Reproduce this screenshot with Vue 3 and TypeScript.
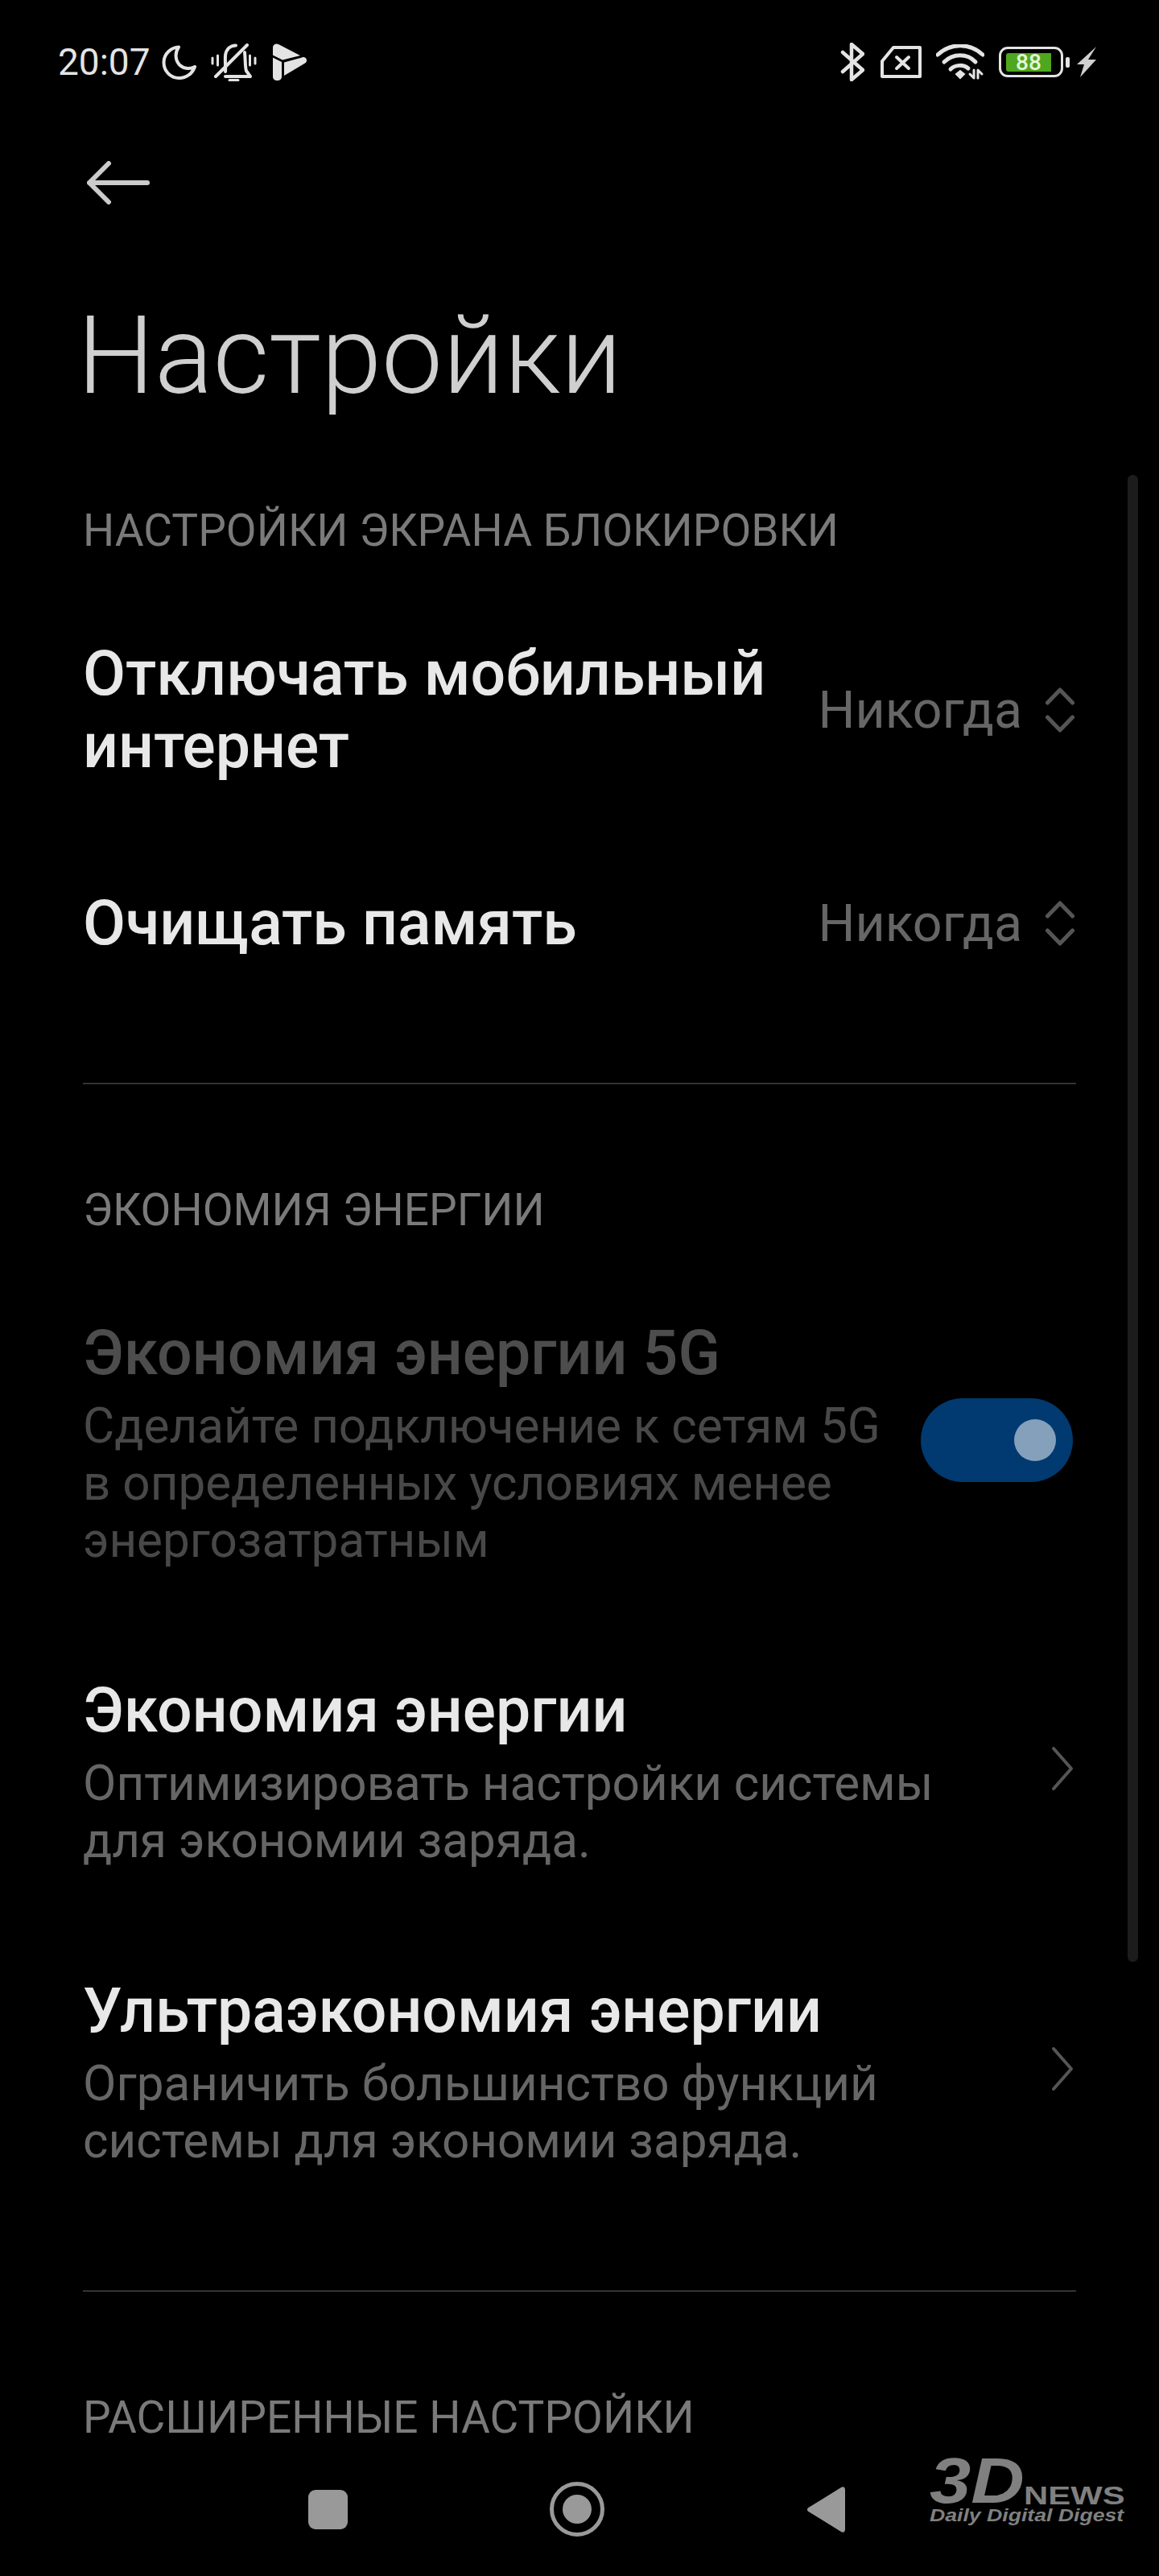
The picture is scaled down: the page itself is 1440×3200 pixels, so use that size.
<template>
  <div class="screen">
    <div class="statusbar">
      <div class="status-left">
        <span class="time">20:07</span>
        <svg class="ic-moon" viewBox="0 0 43 43" fill="none" stroke="#e4e4e4" stroke-width="4" stroke-linejoin="round">
          <path d="M21 2.500C12 2.800 2.500 10.500 2.500 21.500C2.500 32.500 11 41 21.500 41C30.500 41 38 35.500 41 27C36 30 28 30 22.500 25C16.500 19 16 9.500 21 2.500Z" />
        </svg>
        <svg class="ic-bell" viewBox="0 0 57 47" fill="none" stroke="#e4e4e4" stroke-width="4" stroke-linecap="round" stroke-linejoin="round">
          <path d="M18 35C18.500 30 17.500 22 18 15C19 7 24 2.500 31 2.500" />
          <path d="M42 11C43 20 42.500 30 44 34L49 41H18" />
          <path d="M6 41L45 2" />
          <path d="M2 18V25M8.500 15V27M48.500 15V27M55 18V25" stroke-width="3" />
          <path d="M23 45.500H34" stroke-width="3" />
        </svg>
        <svg class="ic-play" viewBox="0 0 43 46" fill="#e4e4e4">
          <path d="M0 5C0 1 4 -0.500 7 1L34 15L12 20.500L0 14.500Z" />
          <path d="M14 23.500L36 17.500C38 16.500 40 17 41.500 19C42.500 21 42 23.500 40 24.500L14 40Z" />
          <path d="M0 17.500L11 23V41C11 44 9 46 5.500 46C2 46 0 44 0 41Z" />
        </svg>
      </div>
      <div class="status-right">
        <svg class="ic-bt" viewBox="0 0 30 48" fill="none" stroke="#e4e4e4" stroke-width="4.500" stroke-linecap="round" stroke-linejoin="round">
          <path d="M3 12L28 34L14 46V2L28 14L3 36" />
        </svg>
        <svg class="ic-sim" viewBox="0 0 51 40" fill="none" stroke="#e4e4e4" stroke-width="4" stroke-linecap="round" stroke-linejoin="round">
          <path d="M2 38V19L16 2H49V38Z" />
          <path d="M20 14L35 28M35 14L20 28" />
        </svg>
        <svg class="ic-wifi" viewBox="0 0 60 44" fill="none" stroke="#e4e4e4" stroke-linecap="round">
          <path d="M2 13C18 -2 42 -2 58 13" stroke-width="5" />
          <path d="M10 22C21 11 39 11 49 22" stroke-width="5" />
          <path d="M18 31C24 25 34 25 40 30" stroke-width="5" />
          <path d="M25 37L30 33L35 37L30 42Z" fill="#e4e4e4" stroke-width="2" />
          <path d="M47 32V42L42 37M52 42V32L57 37" stroke-width="3" stroke-linejoin="round" />
        </svg>
        <div class="battery">
          <div class="battery-body"><span class="battery-fill">88</span></div>
          <span class="battery-nub"></span>
        </div>
        <svg class="ic-bolt" viewBox="0 0 24 38" fill="#cfcfcf">
          <path d="M24 0L14 16L24 16L4 38L9 22L0 22Z" />
        </svg>
      </div>
    </div>

    <div class="back">
      <svg viewBox="0 0 78 54" fill="none" stroke="#cccccc" stroke-width="6" stroke-linecap="round" stroke-linejoin="round">
        <path d="M27 3L3 27L27 51M3 27H75" />
      </svg>
    </div>
    <h1 class="title">Настройки</h1>

    <div class="content">
      <section v-for="s in sections" :key="s.heading" class="section">
        <h2 class="heading">{{ s.heading }}</h2>
        <div v-for="r in s.rows" :key="r.title" class="row" :class="r.kind">
          <div class="row-text">
            <div class="row-title">{{ r.title }}</div>
            <div v-if="r.sub" class="row-sub">{{ r.sub }}</div>
          </div>
          <div v-if="r.value" class="row-value">
            <span>{{ r.value }}</span>
            <svg class="updown" viewBox="0 0 36 56" fill="none" stroke="#555" stroke-width="5" stroke-linecap="round" stroke-linejoin="round">
              <path d="M2.500 19L18 3L33.500 19M2.500 37L18 53L33.500 37" />
            </svg>
          </div>
          <div v-else-if="r.toggle" class="toggle"><span class="knob"></span></div>
          <svg v-else class="chevron" viewBox="0 0 28 56" fill="none" stroke="#555" stroke-width="4" stroke-linecap="round" stroke-linejoin="round">
            <path d="M3 3L25 28L3 53" />
          </svg>
        </div>
      </section>
    </div>

    <nav class="navbar">
      <span class="nav-square"></span>
      <span class="nav-home"><span class="nav-dot"></span></span>
      <svg class="nav-back" viewBox="0 0 47 57" fill="#999">
        <path d="M1.500 26L42 1C45 -1 47 1 47 4V53C47 56 45 58 42 56L1.500 31C-0.500 30 -0.500 27 1.500 26Z" />
      </svg>
    </nav>

    <div class="scrollbar"></div>
    <div class="logo">
      <div class="logo-top"><span class="logo-3d">3D</span><span class="logo-news">NEWS</span></div>
      <div class="logo-sub">Daily Digital Digest</div>
    </div>
  </div>
</template>

<script setup lang="ts">
interface Row {
  title: string
  sub?: string
  value?: string
  toggle?: boolean
  kind?: string
}

const sections: { heading: string; rows: Row[] }[] = [
  {
    heading: 'НАСТРОЙКИ ЭКРАНА БЛОКИРОВКИ',
    rows: [
      { title: 'Отключать мобильный интернет', value: 'Никогда', kind: 'row-select' },
      { title: 'Очищать память', value: 'Никогда', kind: 'row-select' }
    ]
  },
  {
    heading: 'ЭКОНОМИЯ ЭНЕРГИИ',
    rows: [
      {
        title: 'Экономия энергии 5G',
        sub: 'Сделайте подключение к сетям 5G в определенных условиях менее энергозатратным',
        toggle: true,
        kind: 'disabled'
      },
      { title: 'Экономия энергии', sub: 'Оптимизировать настройки системы для экономии заряда.' },
      { title: 'Ультраэкономия энергии', sub: 'Ограничить большинство функций системы для экономии заряда.' }
    ]
  },
  { heading: 'РАСШИРЕННЫЕ НАСТРОЙКИ', rows: [] }
]
</script>

<style>
html,
body {
  margin: 0;
  background: #000;
}
</style>

<style scoped>
.screen {
  position: relative;
  display: flex;
  flex-direction: column;
  width: 1440px;
  height: 3200px;
  overflow: hidden;
  background: #000;
  color: #eee;
  font-family: Roboto, "Noto Sans", sans-serif;
}
.statusbar {
  display: flex;
  flex: none;
  align-items: center;
  justify-content: space-between;
  height: 48px;
  margin-top: 53px;
  padding: 0 78px 0 72px;
}
.status-left,
.status-right {
  display: flex;
  align-items: center;
}
.time {
  font-size: 46px;
  line-height: 48px;
  color: #e4e4e4;
}
.ic-moon {
  width: 43px;
  height: 43px;
  margin-left: 14px;
}
.ic-bell {
  width: 57px;
  height: 47px;
  margin-left: 18px;
}
.ic-play {
  width: 43px;
  height: 46px;
  margin-left: 20px;
}
.ic-bt {
  width: 30px;
  height: 48px;
}
.ic-sim {
  width: 51px;
  height: 40px;
  margin-left: 20px;
}
.ic-wifi {
  width: 60px;
  height: 44px;
  margin-left: 18px;
}
.battery {
  display: flex;
  align-items: center;
  margin-left: 18px;
}
.battery-body {
  display: flex;
  width: 80px;
  height: 38px;
  padding: 5px 12px 4px 6px;
  border: 3px solid #e4e4e4;
  border-radius: 11px;
  box-sizing: border-box;
}
.battery-fill {
  flex: 1;
  border-radius: 3px 0 0 3px;
  background: #4ea71f;
  color: #e6f7d8;
  font-size: 28px;
  font-weight: 500;
  line-height: 24px;
  text-align: center;
}
.battery-nub {
  width: 5px;
  height: 13px;
  margin-left: 3px;
  border-radius: 2px;
  background: #e4e4e4;
}
.ic-bolt {
  width: 24px;
  height: 38px;
  margin-left: 9px;
}
.back {
  flex: none;
  height: 54px;
  margin-top: 99px;
  padding-left: 108px;
}
.back svg {
  display: block;
  width: 78px;
  height: 54px;
}
.title {
  flex: none;
  margin: 108px 0 0 96px;
  color: #cfcfcf;
  font-size: 135.500px;
  font-weight: 300;
  line-height: 160px;
}
.content {
  flex: 1;
  min-height: 0;
  margin: 0 103px;
}
.section {
  padding: 126px 0 150px;
  border-bottom: 2px solid #333;
}
.section:first-child {
  padding: 105px 0 153px;
}
.section:last-child {
  padding-bottom: 0;
  border-bottom: 0;
}
.heading {
  margin: 0;
  color: #7a7a7a;
  font-size: 55px;
  font-weight: 400;
  line-height: 64px;
}
.section + .section .heading {
  margin-top: -2px;
}
.row {
  display: flex;
  align-items: center;
  justify-content: space-between;
  margin-top: 131px;
}
.heading + .row {
  margin-top: 101px;
}
.row-select + .row-select {
  margin-top: 130px;
}
.row-text {
  min-width: 0;
}
.row-title {
  color: #e8e8e8;
  font-size: 77px;
  font-weight: 500;
  line-height: 90px;
}
.row-select .row-title {
  width: 900px;
}
.row-sub {
  width: 1100px;
  margin-top: 10px;
  color: #666;
  font-size: 60.200px;
  line-height: 71px;
}
.row-value {
  display: flex;
  flex: none;
  align-items: center;
  color: #666;
  font-size: 64.500px;
}
.updown {
  width: 36px;
  height: 56px;
  margin: 0 2px 0 29px;
}
.toggle {
  display: flex;
  flex: none;
  align-items: center;
  justify-content: flex-end;
  width: 189px;
  height: 104px;
  margin: 0 4px 8px 0;
  padding-right: 21px;
  border-radius: 52px;
  background: #003a70;
  box-sizing: border-box;
}
.knob {
  width: 52px;
  height: 52px;
  border-radius: 50%;
  background: #84a0bb;
}
.chevron {
  flex: none;
  width: 28px;
  height: 56px;
  margin: 0 3px 8px 0;
}
.disabled .row-title {
  color: #4d4d4d;
}
.disabled .row-sub {
  width: 1000px;
  color: #484848;
}
.navbar {
  display: flex;
  flex: none;
  align-items: center;
  height: 70px;
  margin-bottom: 48px;
  padding-left: 383px;
}
.nav-square {
  width: 49px;
  height: 49px;
  border-radius: 9px;
  background: #999;
}
.nav-home {
  display: flex;
  align-items: center;
  justify-content: center;
  width: 68px;
  height: 68px;
  margin-left: 251px;
  border: 5px solid #999;
  border-radius: 50%;
  box-sizing: border-box;
}
.nav-dot {
  width: 36px;
  height: 36px;
  border-radius: 50%;
  background: #999;
}
.nav-back {
  width: 47px;
  height: 57px;
  margin-left: 252px;
}
.scrollbar {
  position: absolute;
  top: 590px;
  left: 1401px;
  width: 13px;
  height: 1847px;
  border-radius: 6px;
  background: #1c1c1c;
}
.logo {
  position: absolute;
  top: 3050px;
  left: 1155px;
  width: 240px;
  color: #808080;
  font-family: "Liberation Sans", sans-serif;
  font-weight: 700;
}
.logo-top {
  display: flex;
  align-items: flex-end;
  height: 64px;
}
.logo-3d {
  display: inline-block;
  font-size: 80px;
  font-style: italic;
  line-height: 64px;
  transform: scaleX(1.15);
  transform-origin: left bottom;
}
.logo-news {
  display: inline-block;
  margin-left: 15px;
  font-size: 31px;
  line-height: 26px;
  transform: scaleX(1.35);
  transform-origin: left bottom;
}
.logo-sub {
  font-size: 22px;
  font-style: italic;
  line-height: 22px;
  white-space: nowrap;
  transform: scaleX(1.21);
  transform-origin: left top;
}
</style>
